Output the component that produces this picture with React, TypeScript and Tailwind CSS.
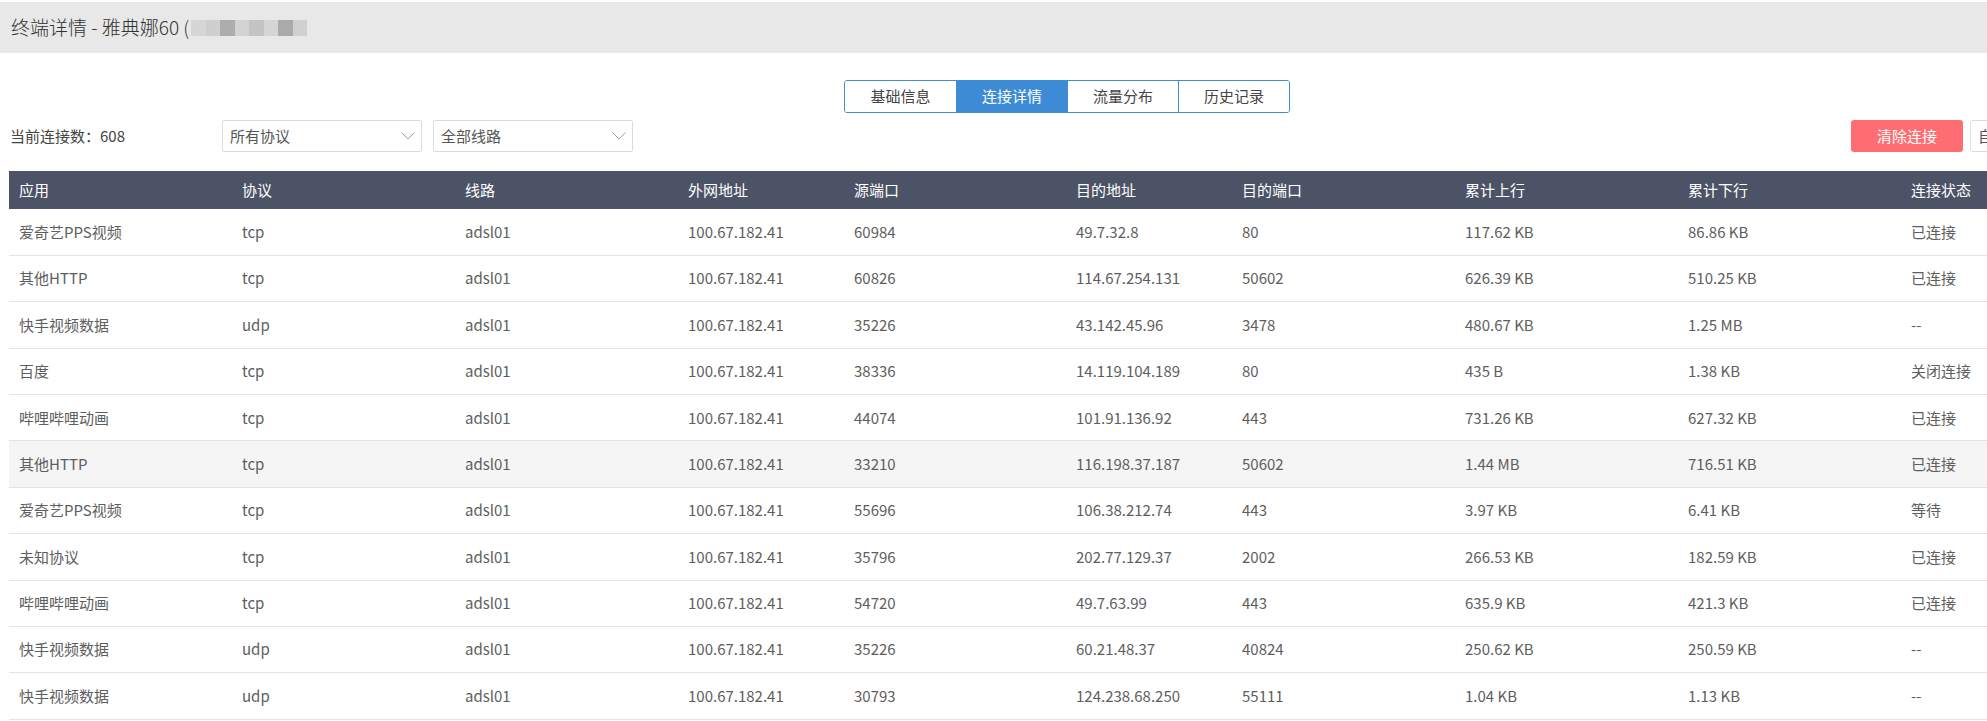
type Conn = {
  app: string
  proto: string
  line: string
  wan: string
  sport: string
  dst: string
  dport: string
  up: string
  down: string
  state: string
}

const rows: Conn[] = [
  { app: '爱奇艺PPS视频', proto: 'tcp', line: 'adsl01', wan: '100.67.182.41', sport: '60984', dst: '49.7.32.8', dport: '80', up: '117.62 KB', down: '86.86 KB', state: '已连接' },
  { app: '其他HTTP', proto: 'tcp', line: 'adsl01', wan: '100.67.182.41', sport: '60826', dst: '114.67.254.131', dport: '50602', up: '626.39 KB', down: '510.25 KB', state: '已连接' },
  { app: '快手视频数据', proto: 'udp', line: 'adsl01', wan: '100.67.182.41', sport: '35226', dst: '43.142.45.96', dport: '3478', up: '480.67 KB', down: '1.25 MB', state: '--' },
  { app: '百度', proto: 'tcp', line: 'adsl01', wan: '100.67.182.41', sport: '38336', dst: '14.119.104.189', dport: '80', up: '435 B', down: '1.38 KB', state: '关闭连接' },
  { app: '哔哩哔哩动画', proto: 'tcp', line: 'adsl01', wan: '100.67.182.41', sport: '44074', dst: '101.91.136.92', dport: '443', up: '731.26 KB', down: '627.32 KB', state: '已连接' },
  { app: '其他HTTP', proto: 'tcp', line: 'adsl01', wan: '100.67.182.41', sport: '33210', dst: '116.198.37.187', dport: '50602', up: '1.44 MB', down: '716.51 KB', state: '已连接' },
  { app: '爱奇艺PPS视频', proto: 'tcp', line: 'adsl01', wan: '100.67.182.41', sport: '55696', dst: '106.38.212.74', dport: '443', up: '3.97 KB', down: '6.41 KB', state: '等待' },
  { app: '未知协议', proto: 'tcp', line: 'adsl01', wan: '100.67.182.41', sport: '35796', dst: '202.77.129.37', dport: '2002', up: '266.53 KB', down: '182.59 KB', state: '已连接' },
  { app: '哔哩哔哩动画', proto: 'tcp', line: 'adsl01', wan: '100.67.182.41', sport: '54720', dst: '49.7.63.99', dport: '443', up: '635.9 KB', down: '421.3 KB', state: '已连接' },
  { app: '快手视频数据', proto: 'udp', line: 'adsl01', wan: '100.67.182.41', sport: '35226', dst: '60.21.48.37', dport: '40824', up: '250.62 KB', down: '250.59 KB', state: '--' },
  { app: '快手视频数据', proto: 'udp', line: 'adsl01', wan: '100.67.182.41', sport: '30793', dst: '124.238.68.250', dport: '55111', up: '1.04 KB', down: '1.13 KB', state: '--' },
]

const columns: { label: string; key: keyof Conn; width: string }[] = [
  { label: '应用', key: 'app', width: 'w-[223px]' },
  { label: '协议', key: 'proto', width: 'w-[223px]' },
  { label: '线路', key: 'line', width: 'w-[223px]' },
  { label: '外网地址', key: 'wan', width: 'w-[166px]' },
  { label: '源端口', key: 'sport', width: 'w-[222px]' },
  { label: '目的地址', key: 'dst', width: 'w-[166px]' },
  { label: '目的端口', key: 'dport', width: 'w-[223px]' },
  { label: '累计上行', key: 'up', width: 'w-[223px]' },
  { label: '累计下行', key: 'down', width: 'w-[223px]' },
  { label: '连接状态', key: 'state', width: 'w-[224px]' },
]

const tabs = ['基础信息', '连接详情', '流量分布', '历史记录']

// 打码的 IP 区域
const mosaic = ['bg-[#d6d6d6]', 'bg-[#cfcfcf]', 'bg-[#adadad]', 'bg-[#d2d2d2]', 'bg-[#c4c4c4]', 'bg-[#d5d5d5]', 'bg-[#aaaaaa]', 'bg-[#d0d0d0]']

function Chevron() {
  return (
    <svg width="14" height="8" viewBox="0 0 14 8" fill="none" stroke="#a0a0a0" strokeWidth="1">
      <polyline points="0.5,0.5 7,7 13.5,0.5" />
    </svg>
  )
}

function Select({ label, width }: { label: string; width: string }) {
  return (
    <div className={`flex h-8 items-center justify-between rounded-[2px] border border-[#dcdcdc] bg-white pr-[6px] pl-[7px] text-[#555] ${width}`}>
      <span>{label}</span>
      <Chevron />
    </div>
  )
}

export default function App() {
  return (
    <div className="h-[721px] w-[1987px] overflow-hidden bg-white text-[15px] [font-family:'Noto_Sans_CJK_SC','Microsoft_YaHei',sans-serif]">
      <div className="w-[2134px]">
        <div className="pt-[2px]">
          <div className="flex h-[51px] items-center bg-[#e8e8e8] pl-[11px] text-[19px] font-light text-[#333]">
            <span>终端详情 - 雅典娜60 (</span>
            <div className="ml-[2px] flex h-[16px]">
              {mosaic.map((c, i) => (
                <div key={i} className={`h-full w-[14.5px] ${c}`} />
              ))}
            </div>
          </div>
        </div>

        <div className="mt-[27px] flex justify-center">
          <div className="flex h-[33px] overflow-hidden rounded-[3px] border border-[#3e8ed6]">
            {tabs.map((t, i) => (
              <div
                key={t}
                className={`flex w-[111px] items-center justify-center ${i > 0 ? 'border-l border-[#3e8ed6]' : ''} ${i === 1 ? 'bg-[#3d8bd5] text-white' : 'bg-white text-[#444]'}`}
              >
                {t}
              </div>
            ))}
          </div>
        </div>

        <div className="mt-[7px] flex h-8 items-center pl-[10px] pr-[9px]">
          <div className="w-[212px] text-[#444]">当前连接数：608</div>
          <Select label="所有协议" width="w-[200px]" />
          <div className="ml-[11px]">
            <Select label="全部线路" width="w-[200px]" />
          </div>
          <div className="flex-1" />
          <button type="button" className="h-8 w-[112px] rounded-[3px] bg-[#ff6d72] text-white">
            清除连接
          </button>
          <button type="button" className="ml-[7px] h-8 w-[155px] rounded-[3px] border border-[#dcdcdc] bg-white pl-[7px] text-left text-[#555]">
            自动刷新
          </button>
        </div>

        <div className="mt-[19px] px-[9px]">
          <table className="w-[2116px] table-fixed border-collapse">
            <colgroup>
              {columns.map((c) => (
                <col key={c.key} className={c.width} />
              ))}
            </colgroup>
            <thead>
              <tr className="h-[38px] bg-[#4c5366] text-white">
                {columns.map((c) => (
                  <th key={c.key} className="pl-[10px] text-left font-normal">
                    {c.label}
                  </th>
                ))}
              </tr>
            </thead>
            <tbody>
              {rows.map((r, i) => (
                <tr key={i} className={`h-[46.4px] border-b border-[#e3e3e3] text-[#5e5e5e] ${i === 5 ? 'bg-[#f5f5f5]' : 'bg-white'}`}>
                  {columns.map((c) => (
                    <td key={c.key} className="pl-[10px]">
                      {r[c.key]}
                    </td>
                  ))}
                </tr>
              ))}
            </tbody>
          </table>
        </div>
      </div>
    </div>
  )
}
